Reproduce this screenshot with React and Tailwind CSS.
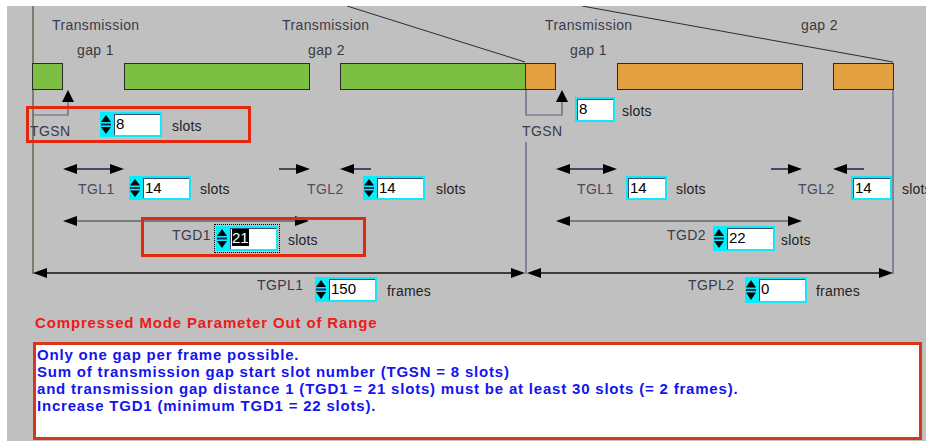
import React from "react";

// timing diagram: page coordinates are used inside the svg (viewBox offset = panel origin)
function HeadL({ x, y }) {
  return <polygon points={`${x},${y} ${x + 14},${y - 5} ${x + 14},${y + 5}`} fill="#000" />;
}
function HeadR({ x, y }) {
  return <polygon points={`${x},${y} ${x - 14},${y - 5} ${x - 14},${y + 5}`} fill="#000" />;
}

function Diagram() {
  return (
    <svg className="absolute left-0 top-0" width="919" height="305" viewBox="7 6 919 305">
      {/* zoom lines */}
      <line x1="347" y1="6" x2="525" y2="62" stroke="#2a2a40" strokeWidth="1" />
      <line x1="582" y1="6" x2="893" y2="62" stroke="#2a2a40" strokeWidth="1" />

      {/* frame edges */}
      <line x1="33" y1="6" x2="33" y2="274" stroke="#6a6552" strokeWidth="1.5" />
      <polyline points="526,89 526,115 562,115 562,102" fill="none" stroke="#5a5a78" strokeWidth="1.2" />
      <line x1="526" y1="142" x2="526" y2="274" stroke="#5a5a78" strokeWidth="1.2" />
      <line x1="893" y1="89" x2="893" y2="274" stroke="#5a5a78" strokeWidth="1.2" />
      <polyline points="33,115 68,115 68,102" fill="none" stroke="#5a5a78" strokeWidth="1.2" />

      {/* bars */}
      <rect x="32.5" y="63.5" width="30" height="26" fill="#7cbf42" stroke="#2b2b2b" />
      <rect x="124.5" y="63.5" width="185" height="26" fill="#7cbf42" stroke="#2b2b2b" />
      <rect x="340.5" y="63.5" width="185" height="26" fill="#7cbf42" stroke="#2b2b2b" />
      <rect x="525.5" y="63.5" width="30" height="26" fill="#e39f40" stroke="#2b2b2b" />
      <rect x="617.5" y="63.5" width="185" height="26" fill="#e39f40" stroke="#2b2b2b" />
      <rect x="833.5" y="63.5" width="60" height="26" fill="#e39f40" stroke="#2b2b2b" />

      {/* TGSN markers */}
      <polygon points="68,90 62,102 74,102" fill="#000" />
      <polygon points="562,90 556,102 568,102" fill="#000" />

      {/* TGL arrows, left frame */}
      <line x1="68" y1="169" x2="118" y2="169" stroke="#202040" strokeWidth="1.5" />
      <HeadL x={63} y={169} />
      <HeadR x={124} y={169} />
      <line x1="279" y1="169" x2="300" y2="169" stroke="#202040" strokeWidth="1.5" />
      <HeadR x={310} y={169} />
      <line x1="350" y1="169" x2="371" y2="169" stroke="#202040" strokeWidth="1.5" />
      <HeadL x={340} y={169} />

      {/* TGD1 */}
      <line x1="70" y1="221" x2="302" y2="221" stroke="#7a7a7a" strokeWidth="2" />
      <HeadL x={63} y={221} />
      <HeadR x={309} y={221} />

      {/* TGPL1 */}
      <line x1="40" y1="273" x2="518" y2="273" stroke="#101010" strokeWidth="1.3" />
      <HeadL x={33} y={273} />
      <HeadR x={525} y={273} />

      {/* right frame */}
      <line x1="562" y1="169" x2="611" y2="169" stroke="#202040" strokeWidth="1.5" />
      <HeadL x={556} y={169} />
      <HeadR x={617} y={169} />
      <line x1="771" y1="169" x2="792" y2="169" stroke="#202040" strokeWidth="1.5" />
      <HeadR x={802} y={169} />
      <line x1="843" y1="169" x2="864" y2="169" stroke="#202040" strokeWidth="1.5" />
      <HeadL x={833} y={169} />

      <line x1="563" y1="221" x2="795" y2="221" stroke="#7a7a7a" strokeWidth="2" />
      <HeadL x={556} y={221} />
      <HeadR x={802} y={221} />

      <line x1="534" y1="273" x2="886" y2="273" stroke="#101010" strokeWidth="1.3" />
      <HeadL x={527} y={273} />
      <HeadR x={893} y={273} />
    </svg>
  );
}

function Spin() {
  return (
    <svg width="12" height="100%" viewBox="0 0 12 25" preserveAspectRatio="none" className="shrink-0">
      <rect width="12" height="25" fill="#00f0ff" />
      <polygon points="6,3 11,10 1,10" fill="#000" />
      <rect x="1" y="11.5" width="10" height="2" fill="#1a2a60" />
      <polygon points="1,15 11,15 6,22" fill="#000" />
    </svg>
  );
}

// spin box (optional arrows) + value field + unit, placed on the diagram canvas
function Param({ value, unit, spin = true, selected, focus, className, fieldW = "w-[50px]" }) {
  return (
    <div className={`absolute flex items-center ${className}`}>
      <div className={`relative flex h-full ${focus ? "outline outline-1 outline-dotted outline-black outline-offset-1" : ""}`}>
        {spin && <Spin />}
        <div className={`h-full bg-white border-2 border-[#10e8f8] shadow-[inset_1px_1px_0_#3a4a6a] text-[15px] leading-[20px] text-black pl-[2px] ${fieldW}`}>
          {selected ? <span className="bg-black text-white">{value}</span> : value}
        </div>
      </div>
      <span className="pt-[2px] text-[14px] leading-4 tracking-[0.2px] text-[#222] whitespace-nowrap">{unit}</span>
    </div>
  );
}

const label = "absolute text-[14px] leading-4 tracking-[0.4px] whitespace-nowrap";

export default function App() {
  return (
    <div className="w-[926px] h-[441px] bg-white pt-[6px] pl-[7px] overflow-hidden font-['Liberation_Sans',Arial,sans-serif]">
      <div className="h-full bg-[#c0c0c0] flex flex-col">
        {/* diagram canvas */}
        <div className="relative h-[305px] shrink-0">
          <Diagram />

          <span className={`${label} left-[45px] top-[11px] text-[#3a3a4a]`}>Transmission</span>
          <span className={`${label} left-[70px] top-[36px] text-[#3a3a3a]`}>gap 1</span>
          <span className={`${label} left-[275px] top-[11px] text-[#3a3a4a]`}>Transmission</span>
          <span className={`${label} left-[301px] top-[36px] text-[#3a3a3a]`}>gap 2</span>
          <span className={`${label} left-[538px] top-[11px] text-[#3a3a4a]`}>Transmission</span>
          <span className={`${label} left-[563px] top-[36px] text-[#3a3a3a]`}>gap 1</span>
          <span className={`${label} left-[794px] top-[11px] text-[#3a3a3a]`}>gap 2</span>

          <span className={`${label} left-[23px] top-[117px] text-[#3a3a4a]`}>TGSN</span>
          <Param value="8" unit="slots" className="left-[93px] top-[106px] h-[25px] gap-[10px]" />

          <span className={`${label} left-[515px] top-[117px] text-[#3a3a4a]`}>TGSN</span>
          <Param value="8" unit="slots" spin={false} fieldW="w-[40px]" className="left-[568px] top-[91px] h-[25px] gap-[7px]" />

          {/* TGL row */}
          <span className={`${label} left-[71px] top-[175px] text-[#4a4a55]`}>TGL1</span>
          <Param value="14" unit="slots" className="left-[122px] top-[170px] h-[24px] gap-[9px]" />

          <span className={`${label} left-[300px] top-[175px] text-[#5a4a5a]`}>TGL2</span>
          <Param value="14" unit="slots" className="left-[356px] top-[170px] h-[24px] gap-[11px]" />

          <span className={`${label} left-[570px] top-[175px] text-[#4a4a55]`}>TGL1</span>
          <Param value="14" unit="slots" spin={false} fieldW="w-[41px]" className="left-[619px] top-[170px] h-[24px] gap-[9px]" />

          <span className={`${label} left-[791px] top-[175px] text-[#4a4a55]`}>TGL2</span>
          <Param value="14" unit="slots" spin={false} fieldW="w-[41px]" className="left-[844px] top-[170px] h-[24px] gap-[10px]" />

          {/* TGD row */}
          <span className={`${label} left-[165px] top-[221px] text-[#3a3a4a]`}>TGD1</span>
          <Param value="21" unit="slots" selected focus className="left-[209px] top-[220px] h-[25px] gap-[10px]" />

          <span className={`${label} left-[660px] top-[221px] text-[#3a3a4a]`}>TGD2</span>
          <Param value="22" unit="slots" className="left-[706px] top-[220px] h-[25px] gap-[6px]" />

          {/* TGPL row */}
          <span className={`${label} left-[250px] top-[271px] text-[#3a3a4a]`}>TGPL1</span>
          <Param value="150" unit="frames" className="left-[308px] top-[271px] h-[25px] gap-[10px]" />

          <span className={`${label} left-[681px] top-[271px] text-[#3a3a4a]`}>TGPL2</span>
          <Param value="0" unit="frames" className="left-[738px] top-[271px] h-[26px] gap-[9px]" />

          {/* highlight boxes */}
          <div className="absolute left-[19px] top-[100px] w-[225px] h-[37px] border-[3px] border-[#e2290f]" />
          <div className="absolute left-[134px] top-[211px] w-[225px] h-[40px] border-[3px] border-[#e2290f]" />
        </div>

        <h2 className="ml-[28px] mt-[3px] text-[15px] leading-[18px] font-bold tracking-[0.85px] text-[#f01818] whitespace-nowrap">
          Compressed Mode Parameter Out of Range
        </h2>

        <div className="ml-[26px] mt-[10px] w-[889px] h-[98px] bg-white border-[3px] border-[#d8361c] pl-[1px] pt-[1px] text-[15px] leading-[17px] font-bold tracking-[0.8px] text-[#1414f0]">
          <p>Only one gap per frame possible.</p>
          <p>Sum of transmission gap start slot number (TGSN = 8 slots)</p>
          <p>and transmission gap distance 1 (TGD1 = 21 slots) must be at least 30 slots (= 2 frames).</p>
          <p>Increase TGD1 (minimum TGD1 = 22 slots).</p>
        </div>
      </div>
    </div>
  );
}
